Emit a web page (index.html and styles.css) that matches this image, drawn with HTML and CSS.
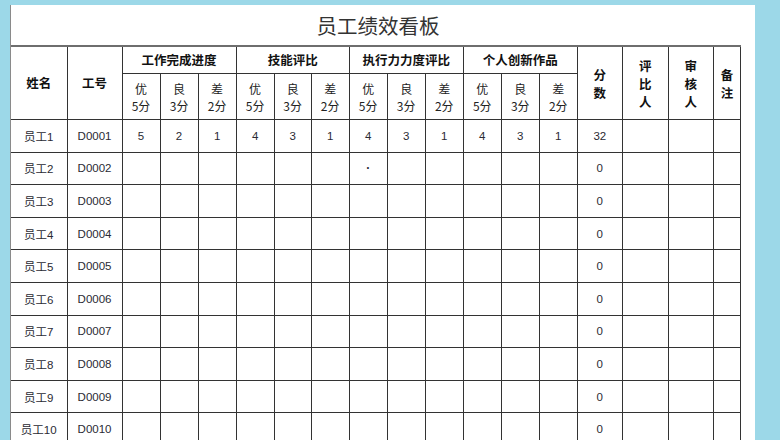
FILE: index.html
```html
<!DOCTYPE html>
<html lang="zh-CN">
<head>
<meta charset="utf-8">
<title>员工绩效看板</title>
<link rel="stylesheet" href="styles.css">
</head>
<body>
<div class="sheet">
  <div class="title">员工绩效看板</div>
  <table class="board">
    <colgroup>
      <col class="c-name"><col class="c-id">
      <col class="c-s"><col class="c-s"><col class="c-s">
      <col class="c-s"><col class="c-s7"><col class="c-s">
      <col class="c-s"><col class="c-s"><col class="c-s">
      <col class="c-s"><col class="c-s"><col class="c-s">
      <col class="c-total"><col class="c-rev"><col class="c-aud"><col class="c-note">
    </colgroup>
    <thead>
      <tr class="h1">
        <th rowspan="2">姓名</th>
        <th rowspan="2">工号</th>
        <th colspan="3">工作完成进度</th>
        <th colspan="3">技能评比</th>
        <th colspan="3">执行力力度评比</th>
        <th colspan="3">个人创新作品</th>
        <th rowspan="2" class="vert">分<br>数</th>
        <th rowspan="2" class="vert">评<br>比<br>人</th>
        <th rowspan="2" class="vert">审<br>核<br>人</th>
        <th rowspan="2" class="vert">备<br>注</th>
      </tr>
      <tr class="h2">
        <th class="sub">优<br>5分</th><th class="sub">良<br>3分</th><th class="sub">差<br>2分</th>
        <th class="sub">优<br>5分</th><th class="sub">良<br>3分</th><th class="sub">差<br>2分</th>
        <th class="sub">优<br>5分</th><th class="sub">良<br>3分</th><th class="sub">差<br>2分</th>
        <th class="sub">优<br>5分</th><th class="sub">良<br>3分</th><th class="sub">差<br>2分</th>
      </tr>
    </thead>
    <tbody>
      <tr><td>员工1</td><td>D0001</td><td>5</td><td>2</td><td>1</td><td>4</td><td>3</td><td>1</td><td>4</td><td>3</td><td>1</td><td>4</td><td>3</td><td>1</td><td>32</td><td></td><td></td><td></td></tr>
      <tr><td>员工2</td><td>D0002</td><td></td><td></td><td></td><td></td><td></td><td></td><td class="dot">·</td><td></td><td></td><td></td><td></td><td></td><td>0</td><td></td><td></td><td></td></tr>
      <tr><td>员工3</td><td>D0003</td><td></td><td></td><td></td><td></td><td></td><td></td><td></td><td></td><td></td><td></td><td></td><td></td><td>0</td><td></td><td></td><td></td></tr>
      <tr><td>员工4</td><td>D0004</td><td></td><td></td><td></td><td></td><td></td><td></td><td></td><td></td><td></td><td></td><td></td><td></td><td>0</td><td></td><td></td><td></td></tr>
      <tr><td>员工5</td><td>D0005</td><td></td><td></td><td></td><td></td><td></td><td></td><td></td><td></td><td></td><td></td><td></td><td></td><td>0</td><td></td><td></td><td></td></tr>
      <tr><td>员工6</td><td>D0006</td><td></td><td></td><td></td><td></td><td></td><td></td><td></td><td></td><td></td><td></td><td></td><td></td><td>0</td><td></td><td></td><td></td></tr>
      <tr><td>员工7</td><td>D0007</td><td></td><td></td><td></td><td></td><td></td><td></td><td></td><td></td><td></td><td></td><td></td><td></td><td>0</td><td></td><td></td><td></td></tr>
      <tr><td>员工8</td><td>D0008</td><td></td><td></td><td></td><td></td><td></td><td></td><td></td><td></td><td></td><td></td><td></td><td></td><td>0</td><td></td><td></td><td></td></tr>
      <tr><td>员工9</td><td>D0009</td><td></td><td></td><td></td><td></td><td></td><td></td><td></td><td></td><td></td><td></td><td></td><td></td><td>0</td><td></td><td></td><td></td></tr>
      <tr><td>员工10</td><td>D0010</td><td></td><td></td><td></td><td></td><td></td><td></td><td></td><td></td><td></td><td></td><td></td><td></td><td>0</td><td></td><td></td><td></td></tr>
    </tbody>
  </table>
</div>
</body>
</html>
```

FILE: styles.css
```css
html, body {
  margin: 0;
  padding: 0;
  height: 100%;
  overflow: hidden;
}
body {
  background: #9cd8e8;
  font-family: "Liberation Sans", "Noto Sans CJK SC", sans-serif;
  color: #222;
}
.sheet {
  margin: 5px 0 0 10px;
  width: 745px;
  height: 480px;
  background: #fff;
  border-left: 1px solid #8a8a8a;
  box-sizing: border-box;
}
.title {
  height: 40px;
  line-height: 40px;
  text-align: center;
  font-family: "Noto Sans CJK SC", sans-serif;
  font-size: 20.5px;
  color: #333;
  padding-right: 10px;
}
.board {
  border-collapse: collapse;
  table-layout: fixed;
  width: 730px;
  border-top: 2px solid #6e6e6e;
}
.c-name { width: 56px; }
.c-id { width: 55px; }
.c-s { width: 38px; }
.c-s7 { width: 37px; }
.c-total { width: 45px; }
.c-rev { width: 46px; }
.c-aud { width: 45px; }
.c-note { width: 27px; }
.board th, .board td {
  border: 1px solid #333;
  text-align: center;
  padding: 0;
  overflow: hidden;
  white-space: nowrap;
}
.board th:first-child, .board td:first-child {
  border-left: none;
}
.board th {
  font-family: "Noto Sans CJK SC", sans-serif;
  font-weight: bold;
  font-size: 12.5px;
  line-height: 18px;
  color: #111;
}
.board th.vert {
  line-height: 18px;
  padding-top: 2px;
}
.h1 th { height: 26px; }
.h2 th { height: 45px; }
.board th.sub {
  font-weight: normal;
  font-size: 12px;
  line-height: 17px;
  color: #222;
}
.board td {
  height: 31.6px;
  font-size: 11.5px;
  color: #2a2a33;
}
.board td.dot {
  font-size: 12px;
  font-weight: bold;
}
```
